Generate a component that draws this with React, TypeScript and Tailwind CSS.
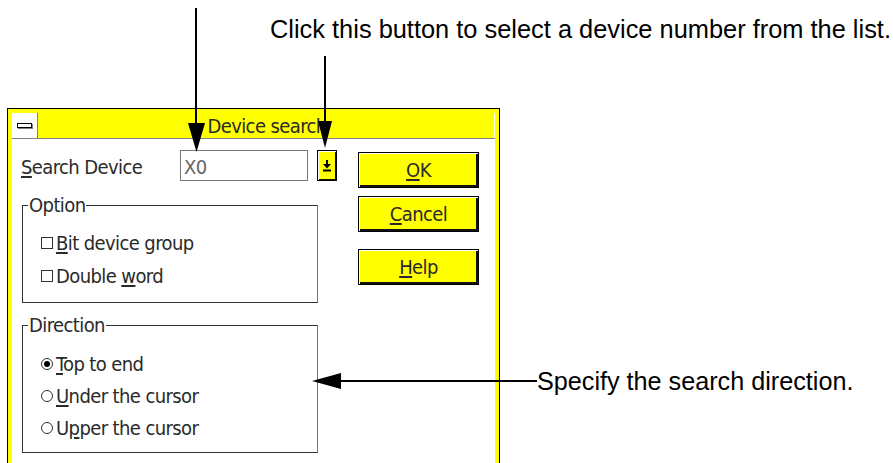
import React from "react";

const DLG = "font-['DejaVu_Sans_Condensed','DejaVu_Sans',sans-serif] font-stretch-condensed tracking-[-0.6px]";

function Btn({ children }: { children: React.ReactNode }) {
  return (
    <div className="w-[121px] h-[36px] bg-[#ffff00] border border-black shadow-[inset_1px_1px_0_#ffffff,inset_-2px_-2px_0_#111111] flex items-center justify-center text-[20px] leading-none text-[#2a2a2a]">
      {children}
    </div>
  );
}

function Check({ children }: { children: React.ReactNode }) {
  return (
    <div className="flex items-center h-[22px]">
      <div className="shrink-0 w-[12px] h-[12px] border border-[#333] bg-white" />
      <span className="ml-[3px] text-[20px] leading-[22px] text-[#2a2a2a]">{children}</span>
    </div>
  );
}

function Radio({ on, children }: { on?: boolean; children: React.ReactNode }) {
  return (
    <div className="flex items-center h-[22px]">
      <div className="shrink-0 w-[12px] h-[12px] rounded-full border border-[#333] bg-white flex items-center justify-center">
        {on ? <div className="w-[6px] h-[6px] rounded-full bg-black" /> : null}
      </div>
      <span className="ml-[3px] text-[20px] leading-[22px] text-[#2a2a2a]">{children}</span>
    </div>
  );
}

export default function App() {
  return (
    <div className="relative w-[893px] h-[463px] bg-white overflow-hidden">
      <div className={`pt-[108px] pl-[7px] ${DLG}`}>
        <div className="w-[493px] h-[355px] border-t border-x border-black bg-[#ffff00] pt-[4px] px-[4px] flex flex-col">
          {/* title bar */}
          <div className="flex h-[26px] border-b border-[#808080] shrink-0">
            <div className="w-[26px] bg-white border-r border-[#808080] flex items-center justify-center">
              <div className="w-[15px] h-[5px] border border-black bg-white shadow-[1px_1px_0_#808080]" />
            </div>
            <div className="flex-1 flex items-center justify-center pt-[1px] pl-[2px] text-[20px] leading-none text-[#2a2a2a] border-r border-white">
              Device search
            </div>
          </div>
          {/* body */}
          <div className="flex-1 bg-white flex">
            <div className="pl-[9px] pt-[11px] flex flex-col">
              <div className="flex items-center h-[31px]">
                <div className="w-[159px] pt-[3px] text-[20px] leading-none text-[#2a2a2a]">
                  <u className="underline-offset-2">S</u>earch Device
                </div>
                <div className="w-[128px] h-[31px] border border-[#777] pl-[3px] pt-[2px] flex items-center text-[20px] leading-none text-[#666]">
                  X0
                </div>
                <div className="ml-[9px] w-[20px] h-[31px] bg-[#ffff00] border border-black shadow-[inset_1px_1px_0_#ffffff,inset_-1px_-1px_0_#111111] flex items-center justify-center">
                  <svg width="10" height="13" viewBox="0 0 10 13">
                    <line x1="5" y1="1" x2="5" y2="6" stroke="black" strokeWidth="2" />
                    <polygon points="1,5 9,5 5,9.5" fill="black" />
                    <rect x="1" y="10.5" width="8" height="2" fill="black" />
                  </svg>
                </div>
              </div>

              {/* Option group */}
              <div className="relative mt-[24px] ml-[1px] w-[296px] h-[98px] border border-[#333] border-r-[#777] pt-[26px] pl-[18px] flex flex-col gap-[11px]">
                <span className="absolute left-[5px] top-[-12px] bg-white px-[1px] text-[20px] leading-[22px] text-[#2a2a2a]">
                  Option
                </span>
                <Check>
                  <u className="underline-offset-2">B</u>it device group
                </Check>
                <Check>
                  Double <u className="underline-offset-2">w</u>ord
                </Check>
              </div>

              {/* Direction group */}
              <div className="relative mt-[22px] ml-[1px] w-[296px] h-[128px] border border-[#333] border-r-[#777] pt-[27px] pl-[18px] flex flex-col gap-[10px]">
                <span className="absolute left-[5px] top-[-12px] bg-white px-[1px] text-[20px] leading-[22px] text-[#2a2a2a]">
                  Direction
                </span>
                <Radio on>
                  <u className="underline-offset-2">T</u>op to end
                </Radio>
                <Radio>
                  <u className="underline-offset-2">U</u>nder the cursor
                </Radio>
                <Radio>
                  U<u className="underline-offset-2">p</u>per the cursor
                </Radio>
              </div>
            </div>

            <div className="ml-[21px] pt-[13px] flex flex-col">
              <Btn>
                <u className="underline-offset-2">O</u>K
              </Btn>
              <div className="mt-[8px]">
                <Btn>
                  <u className="underline-offset-2">C</u>ancel
                </Btn>
              </div>
              <div className="mt-[17px]">
                <Btn>
                  <u className="underline-offset-2">H</u>elp
                </Btn>
              </div>
            </div>
          </div>
        </div>
      </div>

      {/* annotation arrows */}
      <svg className="absolute left-0 top-0" width="893" height="463" viewBox="0 0 893 463">
        <line x1="196" y1="8" x2="196" y2="126" stroke="black" strokeWidth="2" />
        <polygon points="188,123 205,123 196.5,152" fill="black" />
        <line x1="325" y1="56" x2="325" y2="124" stroke="black" strokeWidth="2" />
        <polygon points="318,121 332,121 325,148" fill="black" />
        <line x1="338" y1="381" x2="537" y2="381" stroke="black" strokeWidth="2" />
        <polygon points="312,381 341,373 341,389" fill="black" />
      </svg>

      <div className="absolute left-[270px] top-[14px] font-['Liberation_Sans',Arial,sans-serif] text-[25.4px] leading-[30px] text-black whitespace-nowrap">
        Click this button to select a device number from the list.
      </div>
      <div className="absolute left-[537px] top-[366px] font-['Liberation_Sans',Arial,sans-serif] text-[25.2px] leading-[30px] text-black whitespace-nowrap">
        Specify the search direction.
      </div>
    </div>
  );
}
